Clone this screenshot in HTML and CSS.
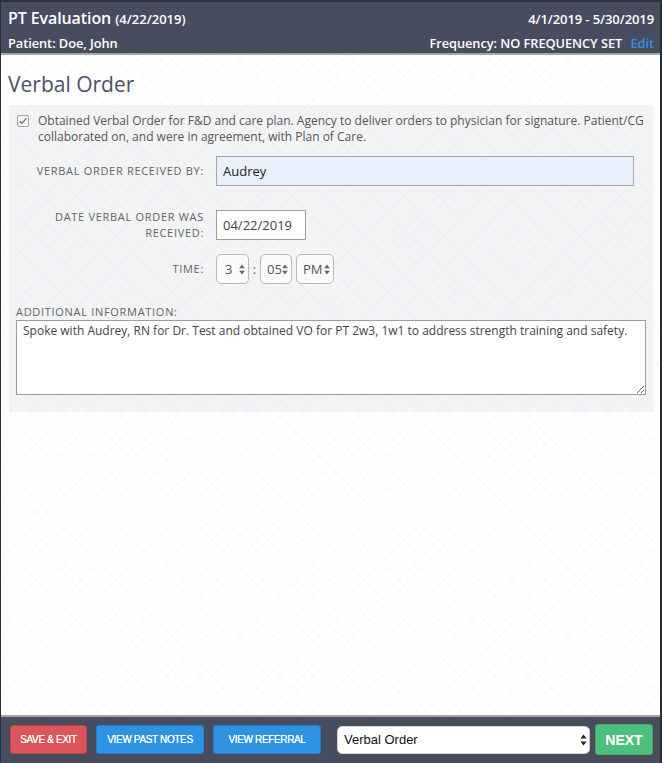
FILE: index.html
```html
<!DOCTYPE html>
<html lang="en">
<head>
<meta charset="utf-8">
<title>PT Evaluation</title>
<link rel="stylesheet" href="styles.css">
</head>
<body>
<div class="app">
  <header class="topbar">
    <div class="topbar-row">
      <div class="title">PT Evaluation <span class="title-date">(4/22/2019)</span></div>
      <div class="period">4/1/2019 - 5/30/2019</div>
    </div>
    <div class="topbar-row second">
      <div class="patient">Patient: Doe, John</div>
      <div class="frequency">Frequency: NO FREQUENCY SET <a class="edit" href="#">Edit</a></div>
    </div>
  </header>

  <main class="content">
    <h1 class="section-title">Verbal Order</h1>
    <section class="panel">
      <label class="check-row">
        <input type="checkbox" class="check" checked>
        <span class="check-text">Obtained Verbal Order for F&amp;D and care plan. Agency to deliver orders to physician for signature. Patient/CG collaborated on, and were in agreement, with Plan of Care.</span>
      </label>

      <div class="form-row first">
        <div class="form-label">Verbal order received by:</div>
        <input class="text-input name-input" type="text" value="Audrey">
      </div>

      <div class="form-row second">
        <div class="form-label">Date verbal order was<br>received:</div>
        <input class="text-input date-input" type="text" value="04/22/2019">
      </div>

      <div class="form-row third">
        <div class="form-label">Time:</div>
        <div class="time-group">
          <select class="time-select hour"><option>3</option></select>
          <span class="colon">:</span>
          <select class="time-select minute"><option>05</option></select>
          <select class="time-select ampm"><option>PM</option></select>
        </div>
      </div>

      <div class="info-label">Additional Information:</div>
      <textarea class="info-text">Spoke with Audrey, RN for Dr. Test and obtained VO for PT 2w3, 1w1 to address strength training and safety.</textarea>
    </section>
  </main>

  <footer class="footer">
    <button class="btn btn-red">SAVE &amp; EXIT</button>
    <button class="btn btn-blue btn-notes">VIEW PAST NOTES</button>
    <button class="btn btn-blue btn-referral">VIEW REFERRAL</button>
    <select class="section-select"><option>Verbal Order</option></select>
    <button class="btn-next">NEXT</button>
  </footer>
</div>
</body>
</html>
```

FILE: styles.css
```css
* { box-sizing: border-box; }

html, body {
  margin: 0;
  padding: 0;
  background: #2b2e36;
}

body {
  width: 662px;
  height: 763px;
  overflow: hidden;
  font-family: "Open Sans", "Liberation Sans", sans-serif;
}

.app {
  width: 662px;
  height: 763px;
  display: flex;
  flex-direction: column;
  border-left: 1px solid #2b2e36;
  border-right: 2px solid #2b2e36;
  background: #fff;
}

/* Header */
.topbar {
  background: #474d5f;
  border-top: 2px solid #2e323b;
  border-bottom: 2px solid #a4a7ae;
  padding: 5px 6px 0 7px;
  height: 55px;
  color: #fff;
}

.topbar-row {
  display: flex;
  justify-content: space-between;
  align-items: baseline;
  height: 22px;
  line-height: 22px;
}

.topbar-row.second {
  margin-top: 5px;
  height: 18px;
  line-height: 18px;
}

.title {
  font-size: 16px;
  font-weight: 600;
  letter-spacing: -0.1px;
}

.title-date {
  font-size: 13px;
  letter-spacing: 0;
}

.period {
  font-size: 13px;
  font-weight: 600;
  letter-spacing: -0.1px;
}

.patient,
.frequency {
  font-size: 12.8px;
  font-weight: 600;
  letter-spacing: -0.05px;
}

.edit {
  color: #2f8fe6;
  text-decoration: none;
  margin-left: 5px;
}

/* Content */
.content {
  flex: 1;
  padding: 0 7px 0 8px;
  background-color: #fff;
  background-image:
    repeating-linear-gradient(45deg, rgba(60, 70, 90, 0.025) 0 1px, transparent 1px 8px),
    repeating-linear-gradient(-45deg, rgba(60, 70, 90, 0.025) 0 1px, transparent 1px 8px);
}

.section-title {
  margin: 15px 0 7px -1px;
  font-size: 21px;
  line-height: 28px;
  font-weight: 400;
  color: #4b5166;
}

.panel {
  background-color: #f3f4f6;
  background-image:
    repeating-linear-gradient(45deg, rgba(60, 70, 90, 0.02) 0 1px, transparent 1px 8px),
    repeating-linear-gradient(-45deg, rgba(60, 70, 90, 0.02) 0 1px, transparent 1px 8px);
  padding: 8px 7px 17px 7px;
}

.check-row {
  display: flex;
  align-items: flex-start;
  font-size: 12px;
  line-height: 16px;
  color: #555;
}

.check {
  appearance: none;
  -webkit-appearance: none;
  flex: none;
  width: 12px;
  height: 12px;
  margin: 2px 9px 0 1px;
  border: 1px solid #a2a2a2;
  border-radius: 2px;
  background-color: #f8f8f8;
  background-image: url("data:image/svg+xml,%3Csvg xmlns='http://www.w3.org/2000/svg' width='10' height='10' viewBox='0 0 10 10'%3E%3Cpath d='M1.8 5.2 L4 7.4 L8.4 2.2' fill='none' stroke='%23707070' stroke-width='1.3'/%3E%3C/svg%3E");
  background-repeat: no-repeat;
  background-position: center;
}

.check-text {
  letter-spacing: 0;
}

.form-row {
  display: flex;
  align-items: center;
  gap: 12px;
}

.form-row.first { margin-top: 11px; }
.form-row.second { margin-top: 23px; }
.form-row.third { margin-top: 13px; }

.form-label {
  width: 188px;
  text-align: right;
  font-size: 11px;
  line-height: 16px;
  letter-spacing: 0.7px;
  text-transform: uppercase;
  color: #646464;
}

.text-input {
  height: 30px;
  border: 1px solid #a5a7ab;
  border-radius: 0;
  padding: 0 6px;
  font-family: "Open Sans", "Liberation Sans", sans-serif;
  font-size: 13px;
  color: #222;
  outline: none;
}

.name-input {
  width: 418px;
  background: #e8f0fc;
}

.date-input {
  width: 90px;
  height: 30px;
  background: #fff;
  color: #444;
  border-color: #9d9d9d;
}

.time-group {
  display: flex;
  align-items: center;
}

.time-select {
  appearance: none;
  -webkit-appearance: none;
  height: 30px;
  border: 1px solid #b8b8b8;
  border-radius: 5px;
  background-color: #fafafa;
  background-image: url("data:image/svg+xml,%3Csvg xmlns='http://www.w3.org/2000/svg' width='6' height='11' viewBox='0 0 6 11'%3E%3Cpath d='M3 0.5 L5.8 4.3 H0.2 Z M3 10.5 L0.2 6.7 H5.8 Z' fill='%23666'/%3E%3C/svg%3E");
  background-repeat: no-repeat;
  font-family: "Open Sans", "Liberation Sans", sans-serif;
  font-size: 13px;
  color: #555;
  padding: 0 0 0 8px;
  outline: none;
}

.time-select.hour {
  width: 33px;
  background-position: 22px center;
}

.colon {
  width: 11px;
  text-align: center;
  font-size: 13px;
  color: #666;
}

.time-select.minute {
  width: 32px;
  padding-left: 6px;
  background-position: 21px center;
}

.time-select.ampm {
  width: 38px;
  margin-left: 4px;
  padding-left: 6px;
  background-position: 27px center;
}

.info-label {
  margin-top: 20px;
  font-size: 11px;
  line-height: 16px;
  letter-spacing: 0.7px;
  text-transform: uppercase;
  color: #646464;
}

.info-text {
  display: block;
  width: 630px;
  height: 75px;
  border: 1px solid #9d9d9d;
  border-radius: 0;
  padding: 2px 6px;
  font-family: "Open Sans", "Liberation Sans", sans-serif;
  font-size: 12px;
  line-height: 16px;
  color: #444;
  background: #fff;
  resize: both;
  outline: none;
}

/* Footer */
.footer {
  height: 48px;
  flex: none;
  background: #474d5f;
  border-top: 2px solid #a4a7ae;
  display: flex;
  align-items: center;
  padding: 0 7px 1px 9px;
}

.btn {
  height: 29px;
  border-radius: 3px;
  font-family: "Liberation Sans", Arial, sans-serif;
  font-size: 10px;
  letter-spacing: -0.35px;
  color: #fff;
  text-shadow: 0 0 0.4px #fff;
  padding: 0;
  cursor: pointer;
}

.btn-red {
  width: 77px;
  background: #dc555c;
  border: 1px solid #b9434b;
}

.btn-blue {
  width: 108px;
  background: #2e93e3;
  border: 1px solid #2380ce;
}

.btn-notes { margin-left: 9px; }
.btn-referral { margin-left: 9px; }

.section-select {
  appearance: none;
  -webkit-appearance: none;
  margin-left: 16px;
  width: 253px;
  height: 28px;
  border: 1px solid #d0d0d0;
  border-radius: 5px;
  background-color: #fff;
  background-image: url("data:image/svg+xml,%3Csvg xmlns='http://www.w3.org/2000/svg' width='7' height='12' viewBox='0 0 7 12'%3E%3Cpath d='M3.5 0.5 L6.6 4.6 H0.4 Z M3.5 11.5 L0.4 7.4 H6.6 Z' fill='%23222'/%3E%3C/svg%3E");
  background-repeat: no-repeat;
  background-position: 242px center;
  font-family: "Liberation Sans", Arial, sans-serif;
  font-size: 13px;
  color: #111;
  padding: 0 0 0 6px;
  outline: none;
}

.btn-next {
  margin-left: 5px;
  width: 58px;
  height: 31px;
  background: #4dc07d;
  border: 1px solid #3fae6d;
  border-radius: 3px;
  font-family: "Liberation Sans", Arial, sans-serif;
  font-size: 14px;
  font-weight: 700;
  color: #fff;
  padding: 0;
}
```
